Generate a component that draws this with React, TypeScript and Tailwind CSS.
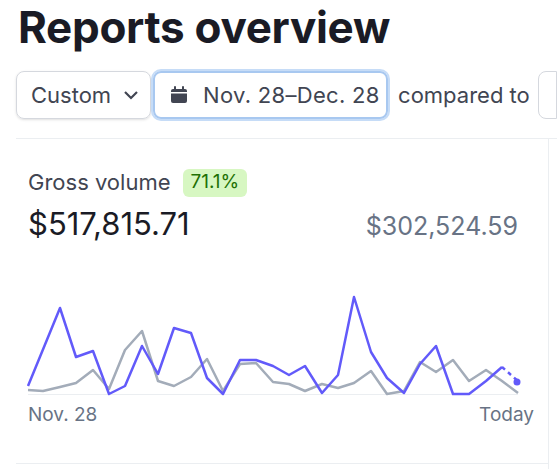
const purple = [[28,387],[60,309],[76,358],[93,352],[109,395],[125,387],[142,347],[158,375],[174,329],[191,334],[207,379],[223,395],[240,361],[256,361],[273,367],[289,376],[305,367],[322,394],[338,376],[354,298],[371,353],[387,379],[404,394],[420,365],[436,347],[453,395],[469,395],[486,382],[502,368]];
const gray = [[28,391],[43,392],[60,388],[76,384],[93,371],[109,390],[125,351],[142,332],[158,382],[174,387],[191,378],[207,360],[223,392],[240,365],[256,364],[273,383],[289,385],[305,392],[322,385],[338,389],[354,384],[371,372],[387,395],[404,392],[420,363],[436,373],[453,361],[469,382],[486,371],[502,382],[518,394]];
const pts = (a: number[][]) => a.map(([x, y]) => `${x},${y - 290}`).join(" ");

export default function App() {
  return (
    <div className="w-[557px] h-[474px] overflow-hidden bg-white text-[#1a1b25]" style={{ fontFamily: "Inter, 'Noto Sans', sans-serif" }}>
      <h1 className="pl-[18px] pt-[2px] text-[44px] leading-[50px] font-bold tracking-[-0.3px]">Reports overview</h1>
      <div className="flex items-center mt-[19px] pl-[16px] whitespace-nowrap">
        <button className="flex items-center gap-[10px] h-[48px] w-[140px] pl-[14px] border border-[#d5d8de] rounded-[8px] shadow-sm text-[22px] text-[#414552]">
          Custom
          <svg width="20" height="20" viewBox="0 0 20 20" fill="none" stroke="#414552" strokeWidth="2.2"><path d="M4 7l6 6 6-6" /></svg>
        </button>
        <button className="ml-[2px] flex items-center gap-[14px] h-[48px] w-[244px] pl-[14px] border-2 border-[#a8c8f0] rounded-[8px] ring-2 ring-[#c6dcf7] text-[22px] tracking-[0.3px] text-[#414552]">
          <svg width="20" height="20" viewBox="0 0 20 20" fill="#414552"><rect x="2" y="4" width="16" height="14" rx="2" /><rect x="5" y="1" width="2" height="4" rx="1" /><rect x="13" y="1" width="2" height="4" rx="1" /><rect x="2" y="7" width="16" height="1.5" fill="#fff" /></svg>
          Nov. 28–Dec. 28
        </button>
        <span className="ml-[10px] text-[22px] text-[#414552]">compared to</span>
        <div className="ml-[8px] h-[48px] w-[20px] border border-[#d5d8de] rounded-l-[8px]" />
      </div>
      <div className="mt-[19px] ml-[16px] border-t border-[#ebeef1] flex">
        <div className="w-[532px] h-[330px] pt-[27px] pl-[12px] relative">
          <div className="flex items-center gap-[12px]">
            <span className="text-[22px] text-[#414552]">Gross volume</span>
            <span className="px-[8px] h-[28px] flex items-center rounded-[6px] bg-[#d7f7c2] text-[#217005] text-[19px]">71.1%</span>
          </div>
          <div className="flex justify-between items-baseline mt-[2px] pr-[30px]">
            <span className="text-[31px] text-[#1a1b25]">$517,815.71</span>
            <span className="text-[25px] text-[#687385]">$302,524.59</span>
          </div>
          <svg className="absolute left-[-16px] top-[150px]" width="540" height="110" viewBox="0 0 540 110">
            <line x1="28" y1="105.5" x2="518" y2="105.5" stroke="#ebeef1" strokeWidth="1" />
            <polyline points={pts(gray)} fill="none" stroke="#a3acb9" strokeWidth="2.5" strokeLinejoin="round" />
            <polyline points={pts(purple)} fill="none" stroke="#625afa" strokeWidth="2.5" strokeLinejoin="round" />
            <polyline points="502,78 519,93" fill="none" stroke="#625afa" strokeWidth="2.5" strokeDasharray="4 4" />
            <circle cx="517" cy="93" r="3.5" fill="#625afa" />
          </svg>
          <div className="absolute left-[12px] right-[14px] top-[262px] flex justify-between text-[19px] text-[#687385]">
            <span>Nov. 28</span><span>Today</span>
          </div>
          <div className="absolute left-0 right-0 bottom-[5px] border-t border-[#ebeef1]" />
        </div>
        <div className="border-l border-[#ebeef1] h-[330px]" />
      </div>
    </div>
  );
}
